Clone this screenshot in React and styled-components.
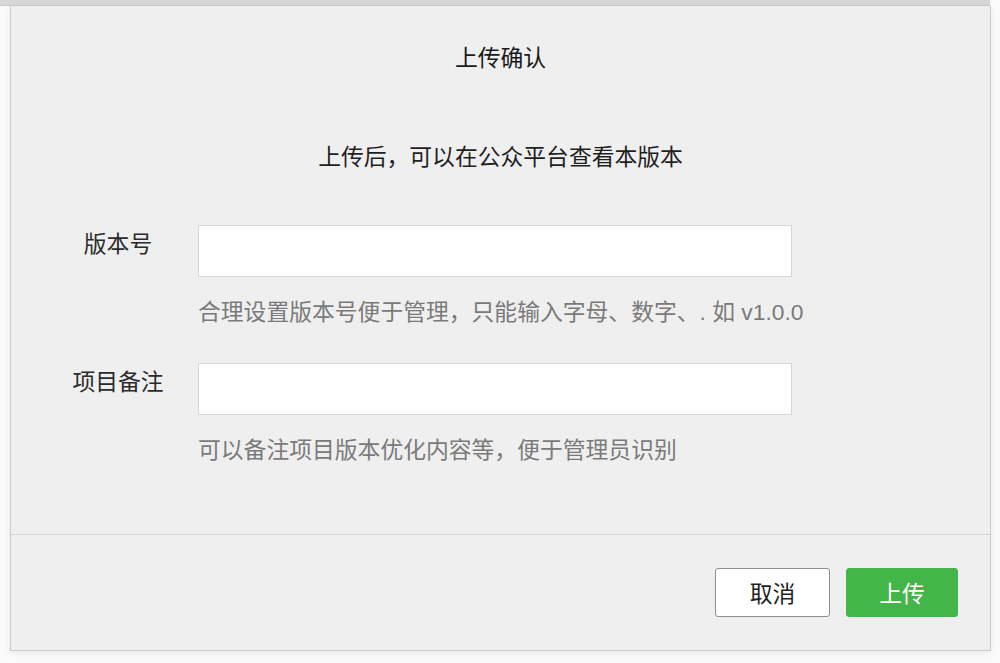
import React from "react";
import styled, { createGlobalStyle } from "styled-components";

const Global = createGlobalStyle`
  html, body { margin: 0; padding: 0; background: #fbfbfb; }
  body { font-family: "Liberation Sans", "Noto Sans CJK SC", sans-serif; }
  * { box-sizing: border-box; }
`;

const Page = styled.div`
  width: 1000px;
  height: 663px;
  overflow: hidden;
  background: #fbfbfb;
`;

const TopStrip = styled.div`
  width: 990px;
  height: 6px;
  background: #d7d7d7;
  border-bottom: 1px solid #cdcdcd;
`;

const Dialog = styled.div`
  margin-left: 10px;
  width: 981px;
  height: 645px;
  background: #efefef;
  border: 1px solid #cbcbcb;
  border-top: none;
  box-shadow: 0 2px 8px rgba(0, 0, 0, 0.08);
  display: flex;
  flex-direction: column;
`;

const Header = styled.div`
  height: 101px;
  display: flex;
  align-items: center;
  justify-content: center;
  font-size: 22.8px;
  color: #1a1a1a;
`;

const Body = styled.div`
  flex: 1;
  display: flex;
  flex-direction: column;
`;

const Subtitle = styled.div`
  margin-top: 35px;
  line-height: 30px;
  text-align: center;
  font-size: 22.8px;
  color: #1f1f1f;
`;

const Row = styled.div`
  display: grid;
  grid-template-columns: 98px 594px;
  column-gap: 31px;
  padding-left: 58px;
  margin-top: ${(p) => p.$top}px;
`;

const Label = styled.div`
  padding-top: 4px;
  line-height: 30px;
  text-align: center;
  font-size: 22.8px;
  color: #2b2b2b;
  white-space: nowrap;
`;

const Field = styled.div`
  display: flex;
  flex-direction: column;
`;

const Input = styled.input`
  width: 594px;
  height: 52px;
  background: #fff;
  border: 1px solid #d6d6d6;
  border-radius: 0;
  outline: none;
  padding: 0 12px;
  font-family: inherit;
  font-size: 20px;
`;

const Hint = styled.div`
  margin-top: 20px;
  line-height: 30px;
  font-size: 22.8px;
  color: #7a7a7a;
  white-space: nowrap;
`;

const Footer = styled.div`
  border-top: 1px solid #d5d5d5;
  height: 116px;
  padding: 33px 32px 0 0;
  display: flex;
  justify-content: flex-end;
  align-items: flex-start;
  gap: 16px;
`;

const Button = styled.button`
  width: ${(p) => (p.$primary ? 112 : 115)}px;
  height: 49px;
  border-radius: 3px;
  font-family: inherit;
  font-size: 22.8px;
  cursor: pointer;
  background: ${(p) => (p.$primary ? "#44b549" : "#ffffff")};
  color: ${(p) => (p.$primary ? "#ffffff" : "#1f1f1f")};
  border: 1px solid ${(p) => (p.$primary ? "#44b549" : "#8e8e8e")};
  padding: 0;
`;

export default function App() {
  return (
    <Page>
      <Global />
      <TopStrip />
      <Dialog>
        <Header>上传确认</Header>
        <Body>
          <Subtitle>上传后，可以在公众平台查看本版本</Subtitle>
          <Row $top={53}>
            <Label>版本号</Label>
            <Field>
              <Input type="text" />
              <Hint>合理设置版本号便于管理，只能输入字母、数字、. 如 v1.0.0</Hint>
            </Field>
          </Row>
          <Row $top={36}>
            <Label>项目备注</Label>
            <Field>
              <Input type="text" />
              <Hint>可以备注项目版本优化内容等，便于管理员识别</Hint>
            </Field>
          </Row>
        </Body>
        <Footer>
          <Button>取消</Button>
          <Button $primary>上传</Button>
        </Footer>
      </Dialog>
    </Page>
  );
}
